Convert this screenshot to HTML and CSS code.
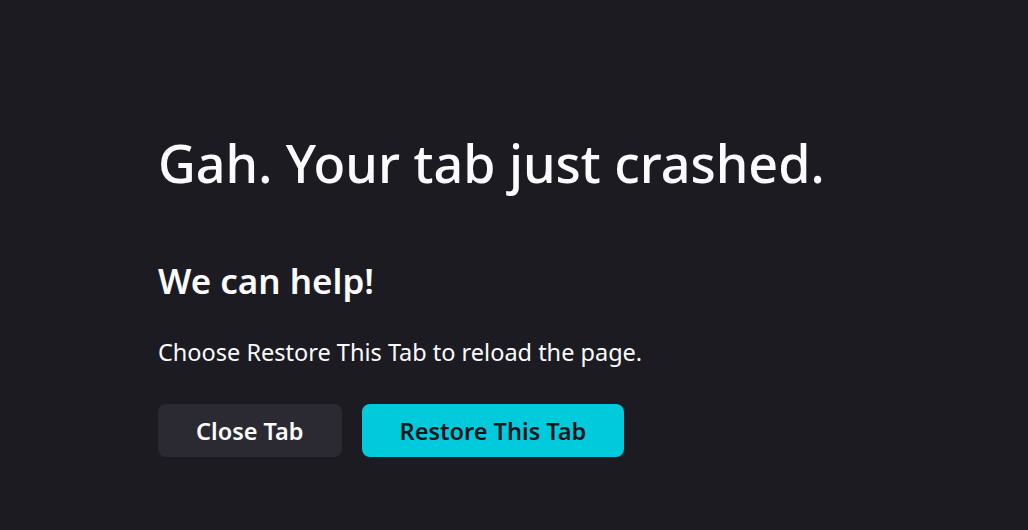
FILE: index.html
```html
<!DOCTYPE html>
<html lang="en">
<head>
    <meta charset="UTF-8">
    <title>Page Crashed</title>
    <link rel="stylesheet" href="styles.css">
</head>
<body>
    <div class="container">
        <h1 class="title">Gah. Your tab just crashed.</h1>
        <h2 class="subtitle">We can help!</h2>
        <p class="message">Choose Restore This Tab to reload the page.</p>
        <div class="button-container">
            <button class="btn" type="button">Close Tab</button>
            <button class="btn primary" type="button">Restore This Tab</button>
        </div>
    </div>
</body>
</html>
```

FILE: styles.css
```css
body {
    font-family: "Noto Sans", sans-serif;
    margin: 0;
    padding: 0;
    background-color: #1c1b22;
    color: #fbfbfe;
    height: 100vh;
}
.container {
    padding: 127px 0 0 158px;
}
.title {
    font-size: 52px;
    font-weight: 500;
    line-height: 72px;
    margin: 0;
}
.subtitle {
    font-size: 35px;
    font-weight: 600;
    line-height: 44px;
    margin: 60px 0 0;
}
.message {
    font-size: 23.5px;
    line-height: 32px;
    margin: 33px 0 0;
}
.button-container {
    display: flex;
    gap: 20px;
    margin-top: 36px;
}
.btn {
    font-family: inherit;
    font-size: 23.5px;
    font-weight: 600;
    height: 53px;
    padding: 0 38px;
    border: none;
    border-radius: 8px;
    background-color: #2b2a33;
    color: #fbfbfe;
    cursor: pointer;
}
.btn.primary {
    background-color: #00cadb;
    color: #15141a;
}
```
